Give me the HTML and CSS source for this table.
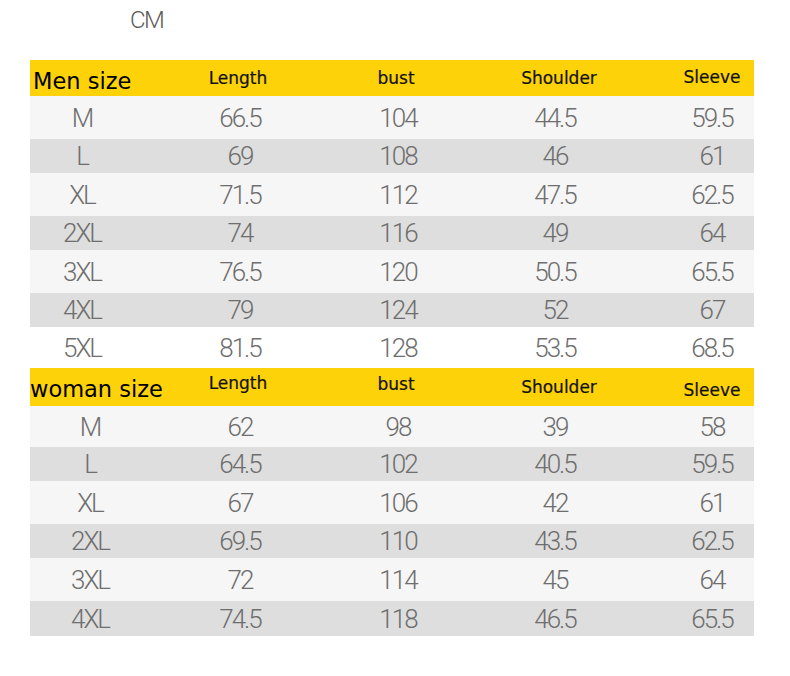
FILE: index.html
```html
<!DOCTYPE html>
<html>
<head>
<meta charset="utf-8">
<link rel="stylesheet" href="styles.css">
</head>
<body>
<div class="page">
  <div class="unit">CM</div>

  <div class="table t-men">
    <div class="row head head-men">
      <div class="cell c1 label">Men size</div>
      <div class="cell c2">Length</div>
      <div class="cell c3">bust</div>
      <div class="cell c4">Shoulder</div>
      <div class="cell c5">Sleeve</div>
    </div>
    <div class="row light"><div class="cell c1">M</div><div class="cell c2">66.5</div><div class="cell c3">104</div><div class="cell c4">44.5</div><div class="cell c5">59.5</div></div>
    <div class="row dark"><div class="cell c1">L</div><div class="cell c2">69</div><div class="cell c3">108</div><div class="cell c4">46</div><div class="cell c5">61</div></div>
    <div class="row light"><div class="cell c1">XL</div><div class="cell c2">71.5</div><div class="cell c3">112</div><div class="cell c4">47.5</div><div class="cell c5">62.5</div></div>
    <div class="row dark"><div class="cell c1">2XL</div><div class="cell c2">74</div><div class="cell c3">116</div><div class="cell c4">49</div><div class="cell c5">64</div></div>
    <div class="row light"><div class="cell c1">3XL</div><div class="cell c2">76.5</div><div class="cell c3">120</div><div class="cell c4">50.5</div><div class="cell c5">65.5</div></div>
    <div class="row dark"><div class="cell c1">4XL</div><div class="cell c2">79</div><div class="cell c3">124</div><div class="cell c4">52</div><div class="cell c5">67</div></div>
    <div class="row plain"><div class="cell c1">5XL</div><div class="cell c2">81.5</div><div class="cell c3">128</div><div class="cell c4">53.5</div><div class="cell c5">68.5</div></div>
  </div>

  <div class="table t-women">
    <div class="row head head-women">
      <div class="cell c1 label">woman size</div>
      <div class="cell c2 up5">Length</div>
      <div class="cell c3 up4">bust</div>
      <div class="cell c4 up1">Shoulder</div>
      <div class="cell c5 down2">Sleeve</div>
    </div>
    <div class="row light first"><div class="cell c1">M</div><div class="cell c2">62</div><div class="cell c3">98</div><div class="cell c4">39</div><div class="cell c5">58</div></div>
    <div class="row dark"><div class="cell c1">L</div><div class="cell c2">64.5</div><div class="cell c3">102</div><div class="cell c4">40.5</div><div class="cell c5">59.5</div></div>
    <div class="row light"><div class="cell c1">XL</div><div class="cell c2">67</div><div class="cell c3">106</div><div class="cell c4">42</div><div class="cell c5">61</div></div>
    <div class="row dark"><div class="cell c1">2XL</div><div class="cell c2">69.5</div><div class="cell c3">110</div><div class="cell c4">43.5</div><div class="cell c5">62.5</div></div>
    <div class="row light"><div class="cell c1">3XL</div><div class="cell c2">72</div><div class="cell c3">114</div><div class="cell c4">45</div><div class="cell c5">64</div></div>
    <div class="row dark last"><div class="cell c1">4XL</div><div class="cell c2">74.5</div><div class="cell c3">118</div><div class="cell c4">46.5</div><div class="cell c5">65.5</div></div>
  </div>
</div>
</body>
</html>
```
FILE: styles.css
```css
html, body {
  margin: 0;
  padding: 0;
  background: #ffffff;
}

.page {
  width: 790px;
  height: 676px;
  padding-left: 30px;
  box-sizing: border-box;
}

.unit {
  height: 60px;
  box-sizing: border-box;
  padding: 4px 0 0 100px;
  font-family: Roboto, "Liberation Sans", sans-serif;
  font-weight: 300;
  font-size: 24px;
  letter-spacing: -1.5px;
  line-height: 32px;
  color: #5a5a5a;
}

.table {
  width: 724px;
}

.row {
  display: grid;
  grid-template-columns: 104px 212px 104px 210px 94px;
  align-items: center;
  font-family: Roboto, "Liberation Sans", sans-serif;
  font-weight: 300;
  font-size: 26px;
  letter-spacing: -2px;
  color: #6e6e6e;
}

.cell {
  text-align: center;
  white-space: nowrap;
  line-height: 30px;
}

.c5 {
  padding-left: 10px;
}

.t-women .row:not(.head) .c1 {
  padding-left: 16px;
}

.light {
  background: #f6f6f6;
  height: 43px;
}

.dark {
  background: #dedede;
  height: 34px;
}

.plain {
  background: #ffffff;
  height: 41px;
}

.first {
  height: 41px;
}

.last {
  height: 35px;
}

.head {
  background: #fdd208;
  font-family: "DejaVu Sans", "Open Sans", sans-serif;
  font-weight: 400;
  font-size: 17px;
  letter-spacing: 0;
  color: #111111;
  -webkit-text-stroke: 0.2px #111111;
}

.head-men {
  height: 36px;
}

.head-women {
  height: 38px;
}

.head .c2 { padding-right: 4px; }
.head .c3 { padding-right: 4px; }
.head .c4 { padding-left: 8px; }

.head .label {
  text-align: left;
  padding-left: 3px;
  font-size: 22.5px;
  font-weight: 400;
  color: #000000;
  -webkit-text-stroke: 0;
}

.head-men .label {
  padding-top: 5px;
}

.head-men .c5 { padding-bottom: 2px; }

.head-women .label {
  padding-left: 0;
  padding-top: 1px;
}

.up5 { padding-bottom: 10px; }
.up4 { padding-bottom: 8px; }
.up1 { padding-bottom: 2px; }
.down2 { padding-top: 4px; }
```
